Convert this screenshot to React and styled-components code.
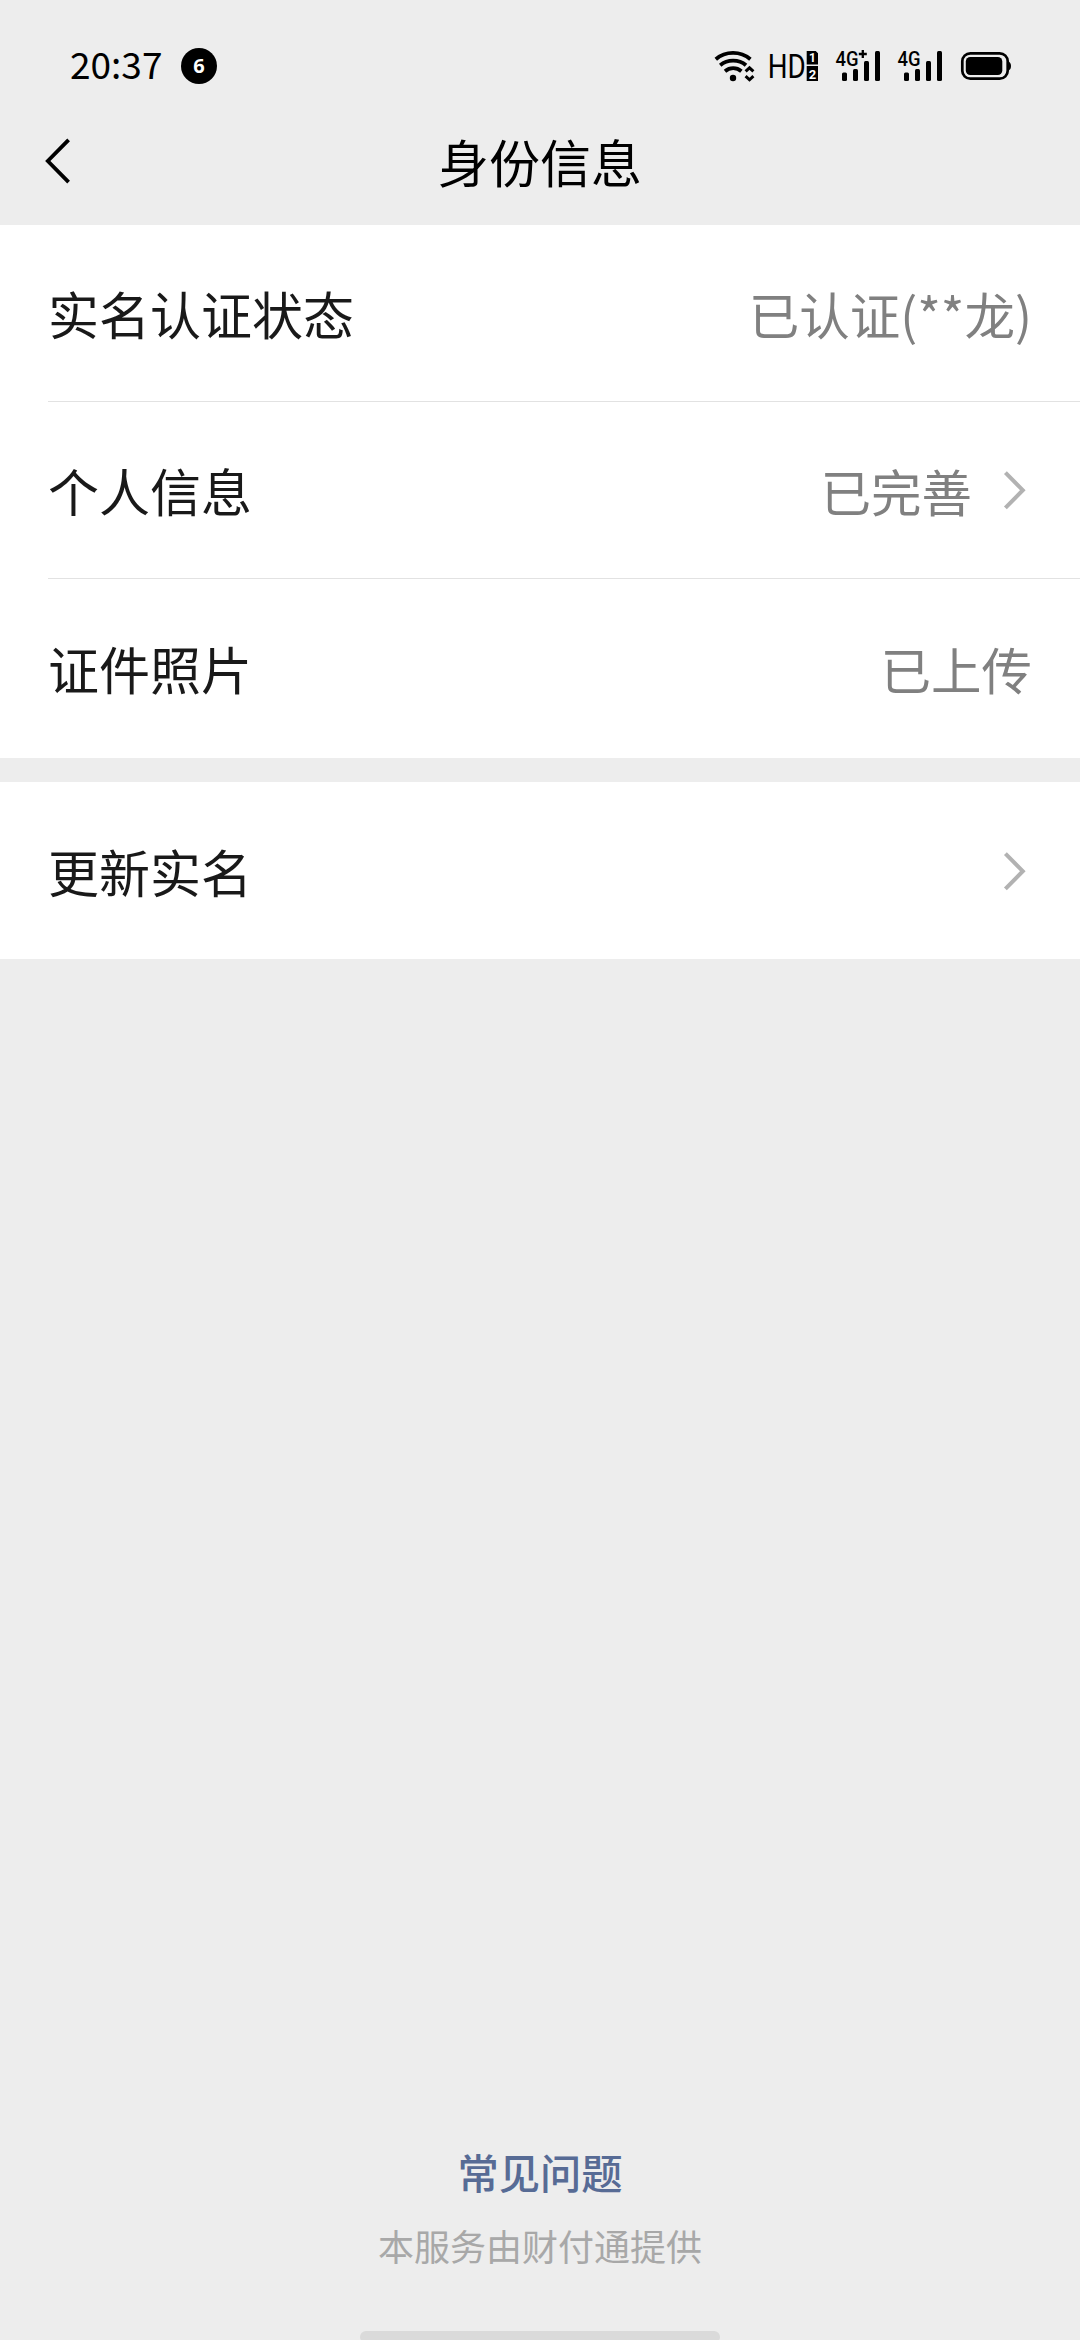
import React from 'react';
import styled, { createGlobalStyle } from 'styled-components';

const GlobalStyle = createGlobalStyle`
  * { box-sizing: border-box; }
  html, body { margin: 0; padding: 0; background: #ededed; }
  body { font-family: "Noto Sans CJK SC", "Noto Sans", sans-serif; }
`;

const Screen = styled.div`
  width: 1080px;
  height: 2340px;
  display: flex;
  flex-direction: column;
  background: #ededed;
  overflow: hidden;
`;

const StatusBar = styled.header`
  flex: none;
  height: 96px;
  padding: 36px 67px 0 70px;
  display: flex;
  justify-content: space-between;
  align-items: flex-start;
  color: #000;
`;

const StatusLeft = styled.div`
  height: 60px;
  display: flex;
  align-items: center;
`;

const Clock = styled.span`
  width: 111px;
  padding-bottom: 5px;
  font-size: 37px;
  line-height: 55px;
  white-space: nowrap;
`;

const Badge = styled.span`
  width: 36px;
  height: 36px;
  border-radius: 50%;
  background: #000;
  color: #fff;
  font: 700 20px/36px "Noto Sans", sans-serif;
  text-align: center;
`;

const StatusRight = styled.div`
  display: flex;
  height: 60px;
`;

const StatusIcon = styled.svg`
  display: block;
  width: ${(p) => p.$w}px;
  height: 60px;
  margin-left: ${(p) => p.$gap || 0}px;
`;

const NavBar = styled.nav`
  flex: none;
  height: 129px;
  display: grid;
  grid-template-columns: 120px 1fr 120px;
  align-items: center;
`;

const BackButton = styled.button`
  border: 0;
  padding: 0 0 0 44px;
  background: none;
  display: flex;
`;

const Title = styled.h1`
  margin: 0;
  font-size: 51px;
  font-weight: 400;
  line-height: 76px;
  color: #000;
  text-align: center;
`;

const Group = styled.section`
  flex: none;
  background: #fff;
  margin-bottom: 24px;
  padding-bottom: ${(p) => p.$extra || 0}px;
`;

const Row = styled.div`
  height: 177px;
  margin-left: 48px;
  padding-right: 48px;
  display: flex;
  align-items: center;
  border-bottom: ${(p) => (p.$divider ? '1px solid #e2e2e2' : '0')};
`;

const Label = styled.span`
  flex: 1;
  font-size: 51px;
  line-height: 76px;
  color: #191919;
`;

const Value = styled.span`
  font-size: 50.5px;
  line-height: 76px;
  color: #808080;
  white-space: nowrap;
`;

const ArrowIcon = styled.svg`
  display: block;
  width: 32px;
  height: 44px;
  margin-left: 28px;
`;

const Footer = styled.footer`
  margin-top: auto;
  display: flex;
  flex-direction: column;
  align-items: center;
`;

const HelpLink = styled.a`
  font-size: 41.3px;
  font-weight: 500;
  line-height: 60px;
  color: #576b95;
`;

const Provider = styled.p`
  margin: 17px 0 59px;
  font-size: 36px;
  font-weight: 400;
  line-height: 54px;
  color: #a8a8a8;
`;

const HomeIndicator = styled.div`
  width: 360px;
  height: 12px;
  margin-bottom: -3px;
  border-radius: 6px;
  background: #dadada;
`;

function Wifi() {
  return (
    <StatusIcon $w={44} viewBox="712 36 44 60" fill="none" stroke="#000" strokeWidth="3.8">
      <path d="M715.8 59.2C725.5 50.8 740.5 50.8 750.4 59.2" />
      <path d="M720.2 65.2C727.5 59 738.8 59 746 65.2" />
      <path d="M725 71.2C729.8 67.2 736.6 67.2 741.4 71.2" />
      <circle cx="733" cy="78" r="3.2" fill="#000" stroke="none" />
      <path d="M745.6 71.4L749.5 67.8L753.4 71.4M745.6 76.2L749.5 79.8L753.4 76.2" strokeWidth="3" />
    </StatusIcon>
  );
}

function HdDualSim() {
  return (
    <StatusIcon $w={52} $gap={12} viewBox="768 36 52 60">
      <text transform="translate(767.7 78) scale(0.83 1)" fontFamily="Roboto" fontSize="33.5">HD</text>
      <path d="M806.7 51h9l2.3 2.3V64.4h-11.3zM806.7 66h11.3v15h-11.3z" />
      <text x="812.4" y="62.4" fill="#fff" fontFamily="Roboto" fontWeight="700" fontSize="12" textAnchor="middle">1</text>
      <text x="812.4" y="78.6" fill="#fff" fontFamily="Roboto" fontWeight="700" fontSize="13" textAnchor="middle">2</text>
    </StatusIcon>
  );
}

function Signal({ gap, plus }) {
  return (
    <StatusIcon $w={48} $gap={gap} viewBox="834 36 48 60">
      <text x="835.5" y="66.3" fontFamily="Roboto" fontWeight="500" fontSize="20" textLength="23" lengthAdjust="spacingAndGlyphs">4G</text>
      {plus && <path d="M858.8 54h8M862.8 50v8" stroke="#000" strokeWidth="2.3" />}
      <rect x="842" y="72.5" width="5" height="8.5" rx="1.5" />
      <rect x="853" y="69" width="5" height="12" rx="1.5" />
      <rect x="864" y="61" width="5" height="20" rx="1.5" />
      <rect x="875" y="51" width="5" height="30" rx="1.5" />
    </StatusIcon>
  );
}

function Battery() {
  return (
    <StatusIcon $w={53} $gap={16} viewBox="960 36 53 60">
      <rect x="962.3" y="53.3" width="45.4" height="25.4" rx="8" fill="none" stroke="#000" strokeWidth="2.7" />
      <rect x="965.8" y="57" width="36.5" height="18" rx="4.5" />
      <path d="M1008.5 61.5Q1011 62.5 1011 66T1008.5 70.5z" />
    </StatusIcon>
  );
}

function Arrow() {
  return (
    <ArrowIcon viewBox="0 0 32 44" fill="none" stroke="#b2b2b2" strokeWidth="4">
      <path d="M5.4 4.6L22.8 22.2L5.4 39.8" />
    </ArrowIcon>
  );
}

function Item({ label, value, arrow, divider }) {
  return (
    <Row $divider={divider}>
      <Label>{label}</Label>
      {value && <Value>{value}</Value>}
      {arrow && <Arrow />}
    </Row>
  );
}

export default function App() {
  return (
    <>
      <GlobalStyle />
      <Screen>
        <StatusBar>
          <StatusLeft>
            <Clock>20:37</Clock>
            <Badge>6</Badge>
          </StatusLeft>
          <StatusRight>
            <Wifi />
            <HdDualSim />
            <Signal gap={14} plus />
            <Signal gap={14} />
            <Battery />
          </StatusRight>
        </StatusBar>
        <NavBar>
          <BackButton aria-label="返回">
            <svg width="28" height="48" viewBox="0 0 28 48" fill="none" stroke="#000" strokeWidth="3.8">
              <path d="M24.6 2.8L3.8 24L24.6 45.2" />
            </svg>
          </BackButton>
          <Title>身份信息</Title>
        </NavBar>
        <Group $extra={2}>
          <Item label="实名认证状态" value="已认证(**龙)" divider />
          <Item label="个人信息" value="已完善" arrow divider />
          <Item label="证件照片" value="已上传" />
        </Group>
        <Group>
          <Item label="更新实名" arrow />
        </Group>
        <Footer>
          <HelpLink>常见问题</HelpLink>
          <Provider>本服务由财付通提供</Provider>
          <HomeIndicator />
        </Footer>
      </Screen>
    </>
  );
}
